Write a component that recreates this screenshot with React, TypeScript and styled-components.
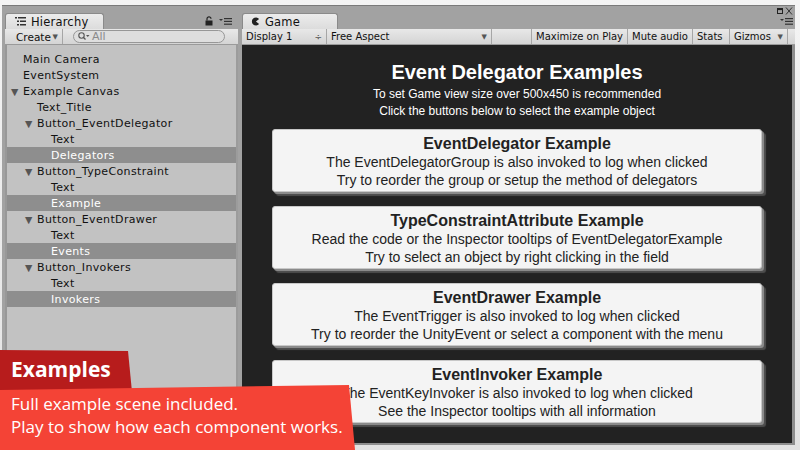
import styled, {createGlobalStyle, css} from "styled-components";

const GlobalStyle = createGlobalStyle`
    html, body {
        margin: 0;
        padding: 0;
        overflow: hidden;
    }
`

const Screen = styled.div`
    position: relative;
    box-sizing: border-box;

    width: 800px;
    height: 450px;

    padding: 5px 5px 5px 2px;

    background: linear-gradient(#f4f4f4, #e2e2e2);

    font-family: "DejaVu Sans", Verdana, sans-serif;
    font-size: 11px;
    color: #111;
`

const Window = styled.div`
    display: flex;
    box-sizing: border-box;

    height: 100%;

    gap: 4px;
    padding-left: 3px;

    border-top: 1px solid #7a7a7a;
    background-color: #a2a2a2;
`

const Panel = styled.div<{ $width?: number }>`
    display: flex;
    flex-direction: column;

    ${props => props.$width ? css`width: ${props.$width}px;` : css`flex: 1;`}
    min-width: 0;
`

const TabRow = styled.div`
    display: flex;
    align-items: flex-end;
    justify-content: space-between;

    height: 23px;
`

const Tab = styled.div<{ $width: number }>`
    display: flex;
    align-items: center;
    box-sizing: border-box;

    width: ${props => props.$width}px;
    height: 16px;

    gap: 5px;
    padding-left: 9px;

    border: 1px solid #8a8a8a;
    border-bottom: none;
    border-radius: 3px 3px 0 0;

    background: linear-gradient(#ececec, #dcdcdc);

    font-size: 11.5px;
    letter-spacing: 0.2px;
`

const TabTools = styled.div`
    display: flex;
    align-items: center;

    gap: 6px;
    padding: 0 6px 3px 0;
`

const WindowTools = styled.div`
    display: flex;
    flex-direction: column;
    align-items: flex-end;

    gap: 3px;
    padding: 0 2px 4px 0;
`

const Toolbar = styled.div`
    display: flex;
    align-items: stretch;
    box-sizing: border-box;

    height: 16px;

    border-bottom: 1px solid #9a9a9a;
    background: linear-gradient(#e8e8e8, #d4d4d4);
`

const ToolItem = styled.div<{ $width?: number, $grow?: boolean }>`
    display: flex;
    align-items: center;
    justify-content: space-between;
    box-sizing: border-box;

    ${props => props.$width && css`width: ${props.$width}px;`}
    ${props => props.$grow && css`flex: 1;`}

    padding: 0 4px;

    border-right: 1px solid #a6a6a6;

    font-size: 10px;
    white-space: nowrap;
`

const Arrow = styled.span`
    font-size: 7px;
    color: #555;
`

const SearchBox = styled.div`
    display: flex;
    align-items: center;
    box-sizing: border-box;

    width: 152px;
    height: 13px;

    margin: 1px 0 0 10px;
    padding-left: 4px;
    gap: 2px;

    border: 1px solid #979797;
    border-radius: 7px;

    background-color: #dedede;

    font-size: 11px;
    color: #8a8a8a;
`

const HierarchyList = styled.div`
    flex: 1;

    padding-top: 6px;

    border-left: 2px solid #989898;
    border-right: 2px solid #9c9c9c;

    background-color: #c2c2c2;
`

const Row = styled.div<{ $depth: number, $selected?: boolean }>`
    display: flex;
    align-items: center;

    height: 16px;

    padding-left: ${props => 16 + props.$depth * 14}px;

    font-size: 11px;
    letter-spacing: 0.35px;

    ${props => props.$selected && css`
        background-color: #8e8e8e;
        color: #fff;
    `}
`

const Fold = styled.span`
    width: 12px;

    margin-left: -12px;

    font-size: 9.5px;
    color: #555;
`

const GameView = styled.div`
    flex: 1;
    display: flex;
    flex-direction: column;
    align-items: center;

    padding-top: 16px;

    border-right: 3px solid #8e8e8e;
    border-bottom: 2px solid #8e8e8e;

    background-color: #222;

    font-family: "Liberation Sans", Arial, sans-serif;
    color: #fff;
`

const Heading = styled.div`
    margin-bottom: 2px;

    font-size: 20px;
    font-weight: bold;
    line-height: 23px;
`

const SubLine = styled.div`
    font-size: 12px;
    line-height: 17px;
`

const CardList = styled.div`
    display: flex;
    flex-direction: column;

    margin-top: 9px;
    gap: 14px;
`

const Card = styled.div`
    box-sizing: border-box;

    width: 490px;
    height: 63px;

    padding-top: 5px;

    border-radius: 3px;
    border: 1px solid #c8c8c8;

    background-color: #f4f4f4;
    box-shadow: 2px 2px 0 #8a8a8a, 4px 4px 1px #4e4e4e;

    color: #222;
    text-align: center;
    font-size: 14px;
    line-height: 18px;
`

const CardTitle = styled.div`
    font-size: 16px;
    font-weight: bold;
`

const DarkTag = styled.div`
    position: absolute;
    left: 0;
    top: 350px;

    box-sizing: border-box;

    width: 132px;
    height: 42px;

    padding: 4px 0 0 11px;

    background-color: #b71c1c;
    clip-path: polygon(0 0, 128px 1px, 132px 100%, 0 100%);

    font-family: "Open Sans", sans-serif;
    font-size: 21px;
    font-weight: bold;
    line-height: 30px;
    color: #fff;
`

const InfoBox = styled.div`
    position: absolute;
    left: 0;
    top: 385px;

    box-sizing: border-box;

    width: 355px;
    height: 65px;

    padding: 7px 0 0 11px;

    background-color: #f44336;
    clip-path: polygon(0 5px, 349px 0, 355px 100%, 0 100%);

    font-family: "Open Sans", sans-serif;
    font-size: 17px;
    line-height: 23px;
    color: #fff;
`

const HierarchyIcon = () => (
	<svg width="11" height="9" viewBox="0 0 11 9">
		<rect x="0" y="0" width="2" height="1.5" fill="#333"/>
		<rect x="3" y="0" width="8" height="1.5" fill="#333"/>
		<rect x="2" y="3.5" width="2" height="1.5" fill="#333"/>
		<rect x="5" y="3.5" width="6" height="1.5" fill="#333"/>
		<rect x="2" y="7" width="2" height="1.5" fill="#333"/>
		<rect x="5" y="7" width="6" height="1.5" fill="#333"/>
	</svg>
)

const GameIcon = () => (
	<svg width="9" height="9" viewBox="0 0 10 10">
		<path d="M9 2.2 A4.5 4.5 0 1 0 9 7.8 L5.5 5 Z" fill="#222"/>
	</svg>
)

const LockIcon = () => (
	<svg width="8" height="10" viewBox="0 0 8 10">
		<path d="M2 4.5 V2.8 A2 2 0 0 1 6 2.8" stroke="#222" strokeWidth="1.2" fill="none"/>
		<rect x="0.5" y="4.5" width="7" height="5" fill="#222"/>
	</svg>
)

const MenuIcon = () => (
	<svg width="13" height="7" viewBox="0 0 13 7">
		<path d="M0 1 H4 L2 3 Z" fill="#333"/>
		<rect x="5" y="0" width="8" height="1.2" fill="#333"/>
		<rect x="5" y="2.8" width="8" height="1.2" fill="#333"/>
		<rect x="5" y="5.6" width="8" height="1.2" fill="#333"/>
	</svg>
)

const WindowButtons = () => (
	<svg width="16" height="8" viewBox="0 0 16 8">
		<rect x="0.5" y="1.5" width="5" height="5" fill="none" stroke="#222"/>
		<rect x="0.5" y="1.5" width="5" height="1.6" fill="#222"/>
		<path d="M9 0.5 L15 7.5 M15 0.5 L9 7.5" stroke="#333" strokeWidth="1"/>
	</svg>
)

const SearchIcon = () => (
	<svg width="12" height="9" viewBox="0 0 12 9">
		<circle cx="3.5" cy="3.5" r="2.7" stroke="#555" strokeWidth="1.1" fill="none"/>
		<path d="M5.5 5.5 L7.5 7.5" stroke="#555" strokeWidth="1.3"/>
		<path d="M8 3 H11.5 L9.75 5 Z" fill="#555"/>
	</svg>
)

type HierarchyItem = {
	name: string
	depth: number
	folded?: boolean
	selected?: boolean
}

const hierarchy: HierarchyItem[] = [
	{name: "Main Camera", depth: 0},
	{name: "EventSystem", depth: 0},
	{name: "Example Canvas", depth: 0, folded: true},
	{name: "Text_Title", depth: 1},
	{name: "Button_EventDelegator", depth: 1, folded: true},
	{name: "Text", depth: 2},
	{name: "Delegators", depth: 2, selected: true},
	{name: "Button_TypeConstraint", depth: 1, folded: true},
	{name: "Text", depth: 2},
	{name: "Example", depth: 2, selected: true},
	{name: "Button_EventDrawer", depth: 1, folded: true},
	{name: "Text", depth: 2},
	{name: "Events", depth: 2, selected: true},
	{name: "Button_Invokers", depth: 1, folded: true},
	{name: "Text", depth: 2},
	{name: "Invokers", depth: 2, selected: true},
]

const examples = [
	{
		title: "EventDelegator Example",
		lines: ["The EventDelegatorGroup is also invoked to log when clicked", "Try to reorder the group or setup the method of delegators"],
	},
	{
		title: "TypeConstraintAttribute Example",
		lines: ["Read the code or the Inspector tooltips of EventDelegatorExample", "Try to select an object by right clicking in the field"],
	},
	{
		title: "EventDrawer Example",
		lines: ["The EventTrigger is also invoked to log when clicked", "Try to reorder the UnityEvent or select a component with the menu"],
	},
	{
		title: "EventInvoker Example",
		lines: ["The EventKeyInvoker is also invoked to log when clicked", "See the Inspector tooltips with all information"],
	},
]

export default function App() {
	return (
		<>
			<GlobalStyle/>
			<Screen>
				<Window>
					<Panel $width={233}>
						<TabRow>
							<Tab $width={99}>
								<HierarchyIcon/>
								<span>Hierarchy</span>
							</Tab>
							<TabTools>
								<LockIcon/>
								<MenuIcon/>
							</TabTools>
						</TabRow>
						<Toolbar>
							<ToolItem $width={58} style={{paddingLeft: 11, fontSize: 10.5}}>
								<span>Create</span>
								<Arrow>▼</Arrow>
							</ToolItem>
							<SearchBox>
								<SearchIcon/>
								<span>All</span>
							</SearchBox>
						</Toolbar>
						<HierarchyList>
							{hierarchy.map((item, index) => (
								<Row key={index} $depth={item.depth} $selected={item.selected}>
									{item.folded && <Fold>▼</Fold>}
									{item.name}
								</Row>
							))}
						</HierarchyList>
					</Panel>

					<Panel>
						<TabRow>
							<Tab $width={96} style={{paddingLeft: 8}}>
								<GameIcon/>
								<span>Game</span>
							</Tab>
							<WindowTools>
								<WindowButtons/>
								<MenuIcon/>
							</WindowTools>
						</TabRow>
						<Toolbar>
							<ToolItem $width={85}>
								<span>Display 1</span>
								<Arrow style={{fontSize: 9}}>÷</Arrow>
							</ToolItem>
							<ToolItem $width={165}>
								<span>Free Aspect</span>
								<Arrow>▼</Arrow>
							</ToolItem>
							<ToolItem $grow/>
							<ToolItem $width={96}>Maximize on Play</ToolItem>
							<ToolItem $width={65}>Mute audio</ToolItem>
							<ToolItem $width={37}>Stats</ToolItem>
							<ToolItem $width={58}>
								<span>Gizmos</span>
								<Arrow>▼</Arrow>
							</ToolItem>
							<ToolItem $width={7} style={{borderRight: "none", padding: 0}}/>
						</Toolbar>
						<GameView>
							<Heading>Event Delegator Examples</Heading>
							<SubLine>To set Game view size over 500x450 is recommended</SubLine>
							<SubLine>Click the buttons below to select the example object</SubLine>
							<CardList>
								{examples.map((example) => (
									<Card key={example.title}>
										<CardTitle>{example.title}</CardTitle>
										{example.lines.map((line) => <div key={line}>{line}</div>)}
									</Card>
								))}
							</CardList>
						</GameView>
					</Panel>
				</Window>

				<DarkTag>Examples</DarkTag>
				<InfoBox>
					<div>Full example scene included.</div>
					<div>Play to show how each component works.</div>
				</InfoBox>
			</Screen>
		</>
	)
}
